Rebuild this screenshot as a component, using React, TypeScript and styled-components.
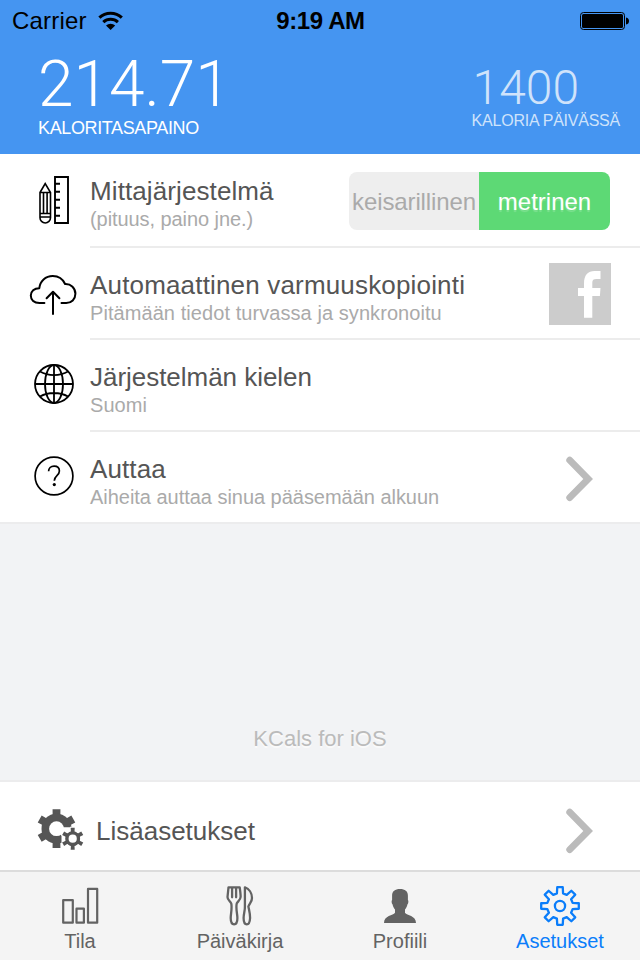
import React from "react";
import styled, { createGlobalStyle } from "styled-components";

const GlobalStyle = createGlobalStyle`
  * { box-sizing: border-box; }
  body { margin: 0; background: #f2f3f5; }
`;

const Screen = styled.div`
  width: 640px;
  height: 960px;
  display: flex;
  flex-direction: column;
  overflow: hidden;
  background: #f2f3f5;
  font-family: "Liberation Sans", Arial, sans-serif;
  color: #555;
`;

const Header = styled.header`
  height: 154px;
  flex: none;
  background: #4595f1;
`;

const StatusBar = styled.div`
  height: 40px;
  display: grid;
  grid-template-columns: 1fr auto 1fr;
  align-items: center;
  padding: 2px 11px 0 12px;
  color: #000;
`;

const Carrier = styled.div`
  display: flex;
  align-items: center;
  gap: 11px;
  font-size: 24px;
  line-height: 28px;
  letter-spacing: 0.2px;
`;

const Clock = styled.div`
  font-size: 24px;
  line-height: 28px;
  font-weight: 700;
  letter-spacing: -0.4px;
`;

const BatteryIcon = styled.svg`
  justify-self: end;
  display: block;
`;

const Stats = styled.div`
  display: flex;
  justify-content: space-between;
  padding: 12px 20px 0 38px;
`;

const Stat = styled.div<{ $dim?: boolean }>`
  color: ${(p) => (p.$dim ? "#cfe3fb" : "#fff")};
  padding-top: ${(p) => (p.$dim ? "12px" : "0")};
`;

const StatValue = styled.div<{ $size: number; $height: number; $indent?: number }>`
  font-family: Roboto, sans-serif;
  font-weight: 300;
  font-size: ${(p) => p.$size}px;
  line-height: ${(p) => p.$height}px;
  padding-left: ${(p) => p.$indent ?? 0}px;
`;

const StatLabel = styled.div<{ $size: number; $spacing: number }>`
  font-size: ${(p) => p.$size}px;
  line-height: 20px;
  letter-spacing: ${(p) => p.$spacing}px;
  white-space: nowrap;
`;

const List = styled.main`
  flex: none;
  background: #fff;
  border-bottom: 2px solid #ececed;
`;

const Row = styled.div<{ $height: number }>`
  height: ${(p) => p.$height}px;
  display: flex;
`;

const IconCell = styled.div`
  width: 90px;
  flex: none;
  svg { display: block; }
`;

const RowBody = styled.div<{ $last?: boolean }>`
  flex: 1;
  display: flex;
  justify-content: space-between;
  padding-top: 22px;
  border-bottom: ${(p) => (p.$last ? "none" : "2px solid #ececec")};
`;

const Title = styled.div<{ $spacing: number }>`
  font-size: 26px;
  line-height: 30px;
  letter-spacing: ${(p) => p.$spacing}px;
  white-space: nowrap;
`;

const Subtitle = styled.div<{ $spacing: number }>`
  font-size: 20px;
  line-height: 24px;
  margin-top: 1px;
  color: #aaa;
  letter-spacing: ${(p) => p.$spacing}px;
  white-space: nowrap;
`;

const Segmented = styled.div`
  display: flex;
  width: 261px;
  height: 58px;
  margin: -4px 30px 0 0;
  border-radius: 8px;
  overflow: hidden;
`;

const Segment = styled.div<{ $active?: boolean }>`
  width: ${(p) => (p.$active ? 131 : 130)}px;
  display: flex;
  align-items: center;
  justify-content: center;
  padding-top: 2px;
  font-size: 24px;
  letter-spacing: ${(p) => (p.$active ? 0 : -0.12)}px;
  white-space: nowrap;
  background: ${(p) => (p.$active ? "#5dd975" : "#eee")};
  color: ${(p) => (p.$active ? "#fff" : "#aaa")};
  text-shadow: ${(p) => (p.$active ? "0 2px 1px rgba(255,255,255,.2)" : "none")};
`;

const FacebookBadge = styled.svg`
  display: block;
  margin: -7px 29px 0 0;
`;

const ChevronIcon = styled.svg<{ $top: number }>`
  display: block;
  margin: ${(p) => p.$top}px 46px 0 0;
`;

const Note = styled.div`
  flex: 1;
  display: flex;
  align-items: flex-end;
  justify-content: center;
  padding-bottom: 27px;
  font-size: 22px;
  line-height: 28px;
  color: #bbb;
  text-shadow: 0 2px 0 #fafafa;
`;

const MoreRow = styled.div`
  height: 90px;
  flex: none;
  display: flex;
  background: #fff;
  border-top: 2px solid #ececed;
`;

const MoreIcon = styled.svg`
  display: block;
  margin: 25px 11px 0 36px;
`;

const MoreLabel = styled.div`
  flex: 1;
  padding-top: 34px;
  font-size: 26px;
  line-height: 30px;
`;

const TabBar = styled.nav`
  height: 90px;
  flex: none;
  display: grid;
  grid-template-columns: repeat(4, 1fr);
  background: #f4f4f4;
  border-top: 2px solid #dcdcdc;
`;

const Tab = styled.div<{ $active?: boolean }>`
  display: flex;
  flex-direction: column;
  align-items: center;
  padding-top: 13px;
  color: ${(p) => (p.$active ? "#0a7dfa" : "#636363")};
  font-size: 20px;
  line-height: 24px;
  svg { display: block; margin-bottom: 2px; }
`;

const Chevron = ({ top }: { top: number }) => (
  <ChevronIcon $top={top} width="28" height="46" viewBox="0 0 28 46" fill="none" stroke="#bbb" strokeWidth="6.8" strokeLinecap="round">
    <path d="M3.7 4.2 22.2 23 3.7 41.6" />
  </ChevronIcon>
);

const WifiIcon = () => (
  <svg width="26" height="20" viewBox="0 0 26 20">
    <g fill="none" stroke="#000" strokeWidth="3.1">
      <path d="M1.4 6.7a16.2 16.2 0 0 1 22.4 0" />
      <path d="M5.3 11.2a10.7 10.7 0 0 1 14.6 0" />
    </g>
    <path d="M8 14.5a6.7 6.7 0 0 1 9.2 0L12.6 19z" />
  </svg>
);

const MeasureIcon = () => (
  <svg width="90" height="92" fill="none" stroke="#000" strokeWidth="1.9">
    <path d="M55 23h13v46H55zM55 29.7h5M55 37.7h5M55 45.7h5M55 53.7h5M55 61.7h5" />
    <path d="M40 38.5 45.2 29.500 50.500 38.500V63.700a5.25 5.25 0 0 1-10.5 0V38.500zM40 38.500h10.500M43.500 38.500v21M47.100 38.500v21M40 59.500h10.500M40 63h10.500" strokeWidth="1.6" />
  </svg>
);

const CloudIcon = () => (
  <svg width="90" height="90" fill="none" stroke="#000" strokeWidth="2" strokeLinecap="round" strokeLinejoin="round">
    <path d="M44.4 55H39.5C34 55 30.8 52 30.8 47.6c0-4.3 3.4-7.4 8.5-7.4C40 33 45.5 28 52.8 28c5.8 0 10 3 12.3 8 6-.3 10.3 4.2 10.3 9.8 0 5.4-4 9.2-9.2 9.2H61.5" />
    <path d="M53 66V44.2M46.6 50.3 53 43.7l6.4 6.6" />
  </svg>
);

const GlobeIcon = () => (
  <svg width="90" height="90" fill="none" stroke="#000" strokeWidth="1.8">
    <circle cx="54" cy="44" r="19" />
    <ellipse cx="54" cy="44" rx="9" ry="19" />
    <path d="M54 25v38M35 44h38M40 31.5c8 4.7 20 4.7 28 0M40 56.5c8-4.7 20-4.7 28 0" />
  </svg>
);

const HelpIcon = () => (
  <svg width="90" height="90" fill="none" stroke="#000" strokeWidth="1.7">
    <circle cx="54" cy="44" r="18.9" />
    <path d="M48.6 39.3c0-3 2.2-5.1 5.500-5.100 3.100 0 5.300 1.900 5.300 4.900 0 4.700-5.100 4.600-5.100 9.700" strokeWidth="1.7" />
    <circle cx="54.3" cy="52.6" r="1.6" fill="#000" stroke="none" />
  </svg>
);

const gearPoints = (
  cx: number, cy: number, teeth: number, outer: number, inner: number,
  tip: number, base: number
) =>
  Array.from({ length: teeth }, (_, i) => {
    const a = (i * 2 * Math.PI) / teeth;
    return [[inner, -base], [outer, -tip], [outer, tip], [inner, base]]
      .map(([r, d]) => `${(cx + r * Math.sin(a + d)).toFixed(2)},${(cy - r * Math.cos(a + d)).toFixed(2)}`)
      .join(" ");
  }).join(" ");

const GearsIcon = () => (
  <MoreIcon width="49" height="46" viewBox="0 0 49 46">
    <polygon points={gearPoints(20.5, 21.7, 6, 19.8, 14.5, 0.2, 0.27)} fill="#555" />
    <circle cx="20.5" cy="21.7" r="15" fill="#555" />
    <circle cx="20.5" cy="21.7" r="7.4" fill="#fff" />
    <path d="M20.5 21.7 27 20.3H34V19.7H38V48H28.5V34.7L25.5 36V29z" fill="#fff" />
    <polygon points={gearPoints(36.7, 31.7, 6, 11.2, 7.3, 0.18, 0.25)} fill="#555" />
    <circle cx="36.7" cy="31.7" r="7.4" fill="#555" />
    <circle cx="36.7" cy="31.7" r="4.1" fill="#fff" />
  </MoreIcon>
);

const ChartIcon = () => (
  <svg width="40" height="42" fill="none" stroke="#636363" strokeWidth="2.2" strokeLinejoin="round">
    <path d="M3.2 15.1h9.600v22.600H3.200zM16.500 23.700h7.400v14h-7.400zM28 3.900h9.200v33.800H28z" />
  </svg>
);

const CutleryIcon = () => (
  <svg width="40" height="42" fill="none" stroke="#636363" strokeWidth="2.3" strokeLinejoin="round" strokeLinecap="round">
    <path d="M8.5 2.3h11.2c.5 4 1 7.2.9 9.700-.2 3-2.700 4.300-3.800 6.300-1.300 4.500.6 10.500.6 14.700 0 4-1.300 6.300-3.300 6.300-2 0-3.400-2.300-3.400-6.300 0-4.500 1.700-10 .5-14.700-.9-2.300-3.800-3.400-3.700-6.300zM12.100 3v9.300M16.100 3v9.300" />
    <path d="M24.900 2.300c4.200 1.600 7 6 7.100 10.700.1 3.800-2.800 5.500-3.600 8.500.7 3.800 1.800 7.500 1.700 11.500-.2 3.800-1.600 6.300-3.300 6.300-2 0-3.200-2.300-3.200-6.300s1.500-7.500 1.300-11.500z" />
  </svg>
);

const ProfileIcon = () => (
  <svg width="40" height="42" fill="#636363">
    <path d="M20 4c5 0 7.9 2.3 7.9 6.5V15c.8.4.6 3.600-.5 4.600-.4 2.200-1.300 3.600-2.400 4.900v3.300c1.800 2.700 11 2.700 11 10.200H4c0-7.500 9.200-7.500 11-10.200v-3.300c-1.100-1.300-2-2.700-2.400-4.900-1.100-1-1.300-4.200-.5-4.600v-4.500C12.100 6.300 15 4 20 4z" />
  </svg>
);

const SettingsIcon = () => (
  <svg width="42" height="42" viewBox="-21 -21 42 42" fill="none" stroke="#0a7dfa" strokeWidth="2.3" strokeLinejoin="round">
    <polygon points={gearPoints(0, 0, 8, 19, 13, 0.145, 0.24)} />
    <circle r="5.1" strokeWidth="2.3" />
  </svg>
);

export default function App() {
  return (
    <Screen>
      <GlobalStyle />
      <Header>
        <StatusBar>
          <Carrier>Carrier <WifiIcon /></Carrier>
          <Clock>9:19 AM</Clock>
          <BatteryIcon width="50" height="20" viewBox="0 0 50 20">
            <rect x="1.5" y="1.5" width="44" height="17" rx="3" fill="none" stroke="#000" strokeWidth="1" />
            <rect x="3" y="3" width="41" height="14" rx="1.5" />
            <path d="M47 6.5c2.5.5 3 2 3 3.5s-.5 3-3 3.5z" />
          </BatteryIcon>
        </StatusBar>
        <Stats>
          <Stat>
            <StatValue $size={64} $height={66}>214.71</StatValue>
            <StatLabel $size={18} $spacing={-0.37}>KALORITASAPAINO</StatLabel>
          </Stat>
          <Stat $dim>
            <StatValue $size={48} $height={47} $indent={1}>1400</StatValue>
            <StatLabel $size={16} $spacing={-0.23}>KALORIA PÄIVÄSSÄ</StatLabel>
          </Stat>
        </Stats>
      </Header>
      <List>
        <Row $height={94}>
          <IconCell><MeasureIcon /></IconCell>
          <RowBody>
            <div>
              <Title $spacing={0.1}>Mittajärjestelmä</Title>
              <Subtitle $spacing={-0.07}>(pituus, paino jne.)</Subtitle>
            </div>
            <Segmented>
              <Segment>keisarillinen</Segment>
              <Segment $active>metrinen</Segment>
            </Segmented>
          </RowBody>
        </Row>
        <Row $height={92}>
          <IconCell><CloudIcon /></IconCell>
          <RowBody>
            <div>
              <Title $spacing={0.17}>Automaattinen varmuuskopiointi</Title>
              <Subtitle $spacing={0.07}>Pitämään tiedot turvassa ja synkronoitu</Subtitle>
            </div>
            <FacebookBadge width="62" height="62" viewBox="0 0 62 62">
              <path fill="#ccc" d="M0 0h62v62H0z" />
              <path fill="#fff" d="M35 54.7V33h-6v-8h6v-4.500C35 12 39 8 45.500 8h6v8h-4c-3 0-4.200 1-4.200 3.500V25h8.200l-.6 8h-7.600v21.700z" />
            </FacebookBadge>
          </RowBody>
        </Row>
        <Row $height={92}>
          <IconCell><GlobeIcon /></IconCell>
          <RowBody>
            <div>
              <Title $spacing={-0.03}>Järjestelmän kielen</Title>
              <Subtitle $spacing={0.05}>Suomi</Subtitle>
            </div>
          </RowBody>
        </Row>
        <Row $height={90}>
          <IconCell><HelpIcon /></IconCell>
          <RowBody $last>
            <div>
              <Title $spacing={0.1}>Auttaa</Title>
              <Subtitle $spacing={-0.03}>Aiheita auttaa sinua pääsemään alkuun</Subtitle>
            </div>
            <Chevron top={2} />
          </RowBody>
        </Row>
      </List>
      <Note>KCals for iOS</Note>
      <MoreRow>
        <GearsIcon />
        <MoreLabel>Lisäasetukset</MoreLabel>
        <Chevron top={26} />
      </MoreRow>
      <TabBar>
        <Tab><ChartIcon />Tila</Tab>
        <Tab><CutleryIcon />Päiväkirja</Tab>
        <Tab><ProfileIcon />Profiili</Tab>
        <Tab $active><SettingsIcon />Asetukset</Tab>
      </TabBar>
    </Screen>
  );
}
